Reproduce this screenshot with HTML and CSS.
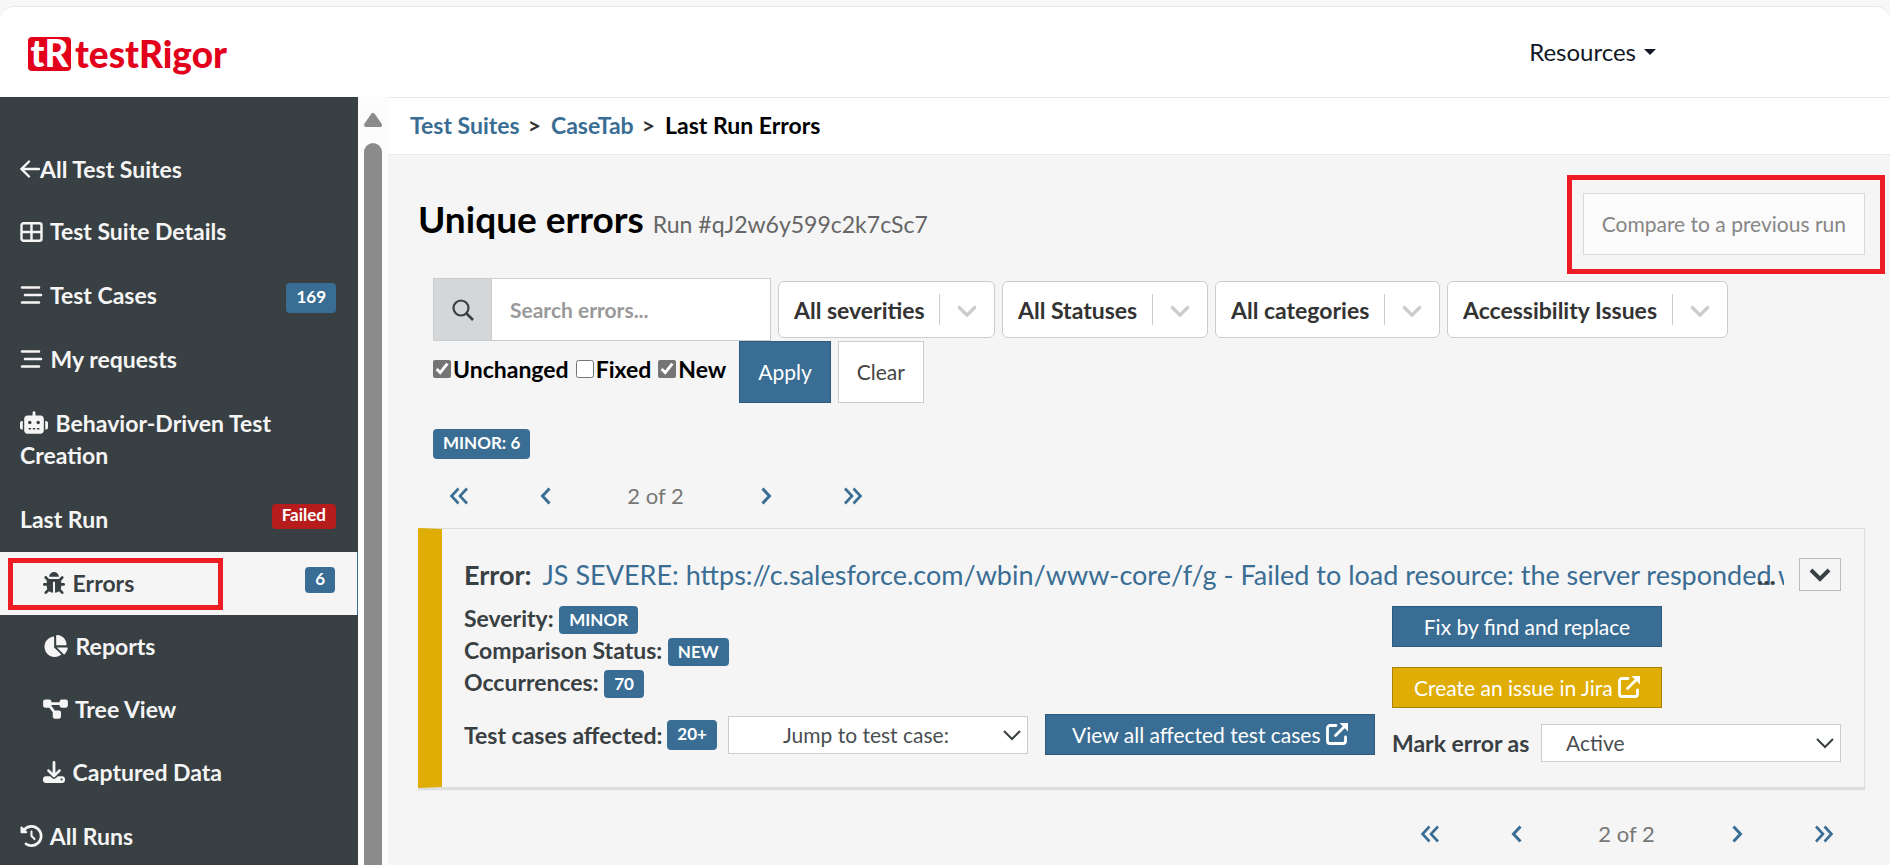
FILE: index.html
```
<!DOCTYPE html>
<html lang="en">
<head>
  <meta charset="UTF-8" />
  <meta name="viewport" content="width=device-width, initial-scale=1.0"/>
  <title>Last Run Errors - testRigor</title>
  <link rel="stylesheet" href="styles.css">
</head>
<body>
  <!-- shared icons -->
  <svg class="sprite" aria-hidden="true">
    <symbol id="bars" viewBox="0 0 22 18"><path d="M1.5 1.5h17M4.5 9h16M1.5 16.5h17" fill="none" stroke="currentColor" stroke-width="2.5" stroke-linecap="round"/></symbol>
    <symbol id="external" viewBox="0 0 22 22"><path d="M10 2.5H4a2.5 2.5 0 0 0-2.500 2.500v13A2.500 2.500 0 0 0 4 20.500h13a2.500 2.500 0 0 0 2.500-2.500v-4M9.500 12.500 18.500 3.500" fill="none" stroke="currentColor" stroke-width="2.800" stroke-linecap="round"/><path d="M13.5 0h8.500v8.500z" fill="currentColor"/></symbol>
    <symbol id="chevron" viewBox="0 0 20 20"><path d="M4.5 7.500l5.500 5.500 5.500-5.500" fill="none" stroke="currentColor" stroke-width="2.400" stroke-linecap="round"/></symbol>
    <symbol id="caret" viewBox="0 0 20 20"><path d="M2 6l8 8 8-8" fill="none" stroke="currentColor" stroke-width="2"/></symbol>
    <symbol id="left" viewBox="0 0 20 20"><path d="M13.5 2.500l-7 7.500 7 7.500" fill="none" stroke="currentColor" stroke-width="3"/></symbol>
    <symbol id="right" viewBox="0 0 20 20"><path d="M6.500 2.500l7 7.500-7 7.500" fill="none" stroke="currentColor" stroke-width="3"/></symbol>
    <symbol id="first" viewBox="0 0 20 20"><path d="M9.500 2.500l-7 7.500 7 7.500M18 2.500 11 10l7 7.500" fill="none" stroke="currentColor" stroke-width="2.600"/></symbol>
    <symbol id="last" viewBox="0 0 20 20"><path d="M2 2.500 9 10l-7 7.500M10.500 2.500l7 7.500-7 7.500" fill="none" stroke="currentColor" stroke-width="2.600"/></symbol>
  </svg>

  <header class="topbar">
    <a class="logo" href="#"><span class="logo-mark">tR</span><span class="logo-name">testRigor</span></a>
    <button class="resources" type="button">Resources <span class="down"></span></button>
  </header>

  <div class="shell">
    <nav class="sidebar">
      <a class="nav-item back" href="#"><svg width="20" height="18" viewBox="0 0 20 18"><path d="M19 9H2M9 1.500 1.500 9 9 16.500" fill="none" stroke="currentColor" stroke-width="2.400" stroke-linecap="round"/></svg>All Test Suites</a>
      <a class="nav-item" href="#"><svg class="icon" width="23" height="20" viewBox="0 0 23 20"><path d="M3.500 1.200h16a2 2 0 0 1 2 2v13.600a2 2 0 0 1-2 2h-16a2 2 0 0 1-2-2V3.200a2 2 0 0 1 2-2zM1.500 10h20M11.500 1v18" fill="none" stroke="currentColor" stroke-width="2.400"/></svg> Test Suite Details</a>
      <a class="nav-item" href="#"><svg class="icon short" width="23" height="18"><use href="#bars"/></svg> Test Cases <span class="badge side">169</span></a>
      <a class="nav-item" href="#"><svg class="icon short" width="23" height="18"><use href="#bars"/></svg> My requests</a>
      <a class="nav-item" href="#"><svg class="icon" width="28" height="23" viewBox="0 0 640 512"><path fill="currentColor" d="M320 0c17.700 0 32 14.300 32 32V96H472c39.800 0 72 32.200 72 72V440c0 39.800-32.200 72-72 72H168c-39.800 0-72-32.200-72-72V168c0-39.800 32.200-72 72-72H288V32c0-17.700 14.300-32 32-32zM208 384c-8.800 0-16 7.200-16 16s7.200 16 16 16h32c8.800 0 16-7.200 16-16s-7.200-16-16-16H208zm96 0c-8.800 0-16 7.200-16 16s7.200 16 16 16h32c8.800 0 16-7.200 16-16s-7.200-16-16-16H304zm96 0c-8.800 0-16 7.200-16 16s7.200 16 16 16h32c8.800 0 16-7.200 16-16s-7.200-16-16-16H400zM264 256a40 40 0 1 0 -80 0 40 40 0 1 0 80 0zm152 40a40 40 0 1 0 0-80 40 40 0 1 0 0 80zM48 224H64V416H48c-26.500 0-48-21.500-48-48V272c0-26.500 21.500-48 48-48zm544 0c26.500 0 48 21.500 48 48v96c0 26.500-21.500 48-48 48H576V224h16z"/></svg> Behavior-Driven Test Creation</a>
      <a class="nav-item" href="#">Last Run <span class="badge side failed">Failed</span></a>
      <a class="nav-item sub active" href="#"><svg class="icon" width="22" height="22" viewBox="0 0 512 512"><path fill="currentColor" d="M511.988 288.900c-.478 17.430-15.217 31.100-32.653 31.100H424v16c0 21.864-4.882 42.584-13.600 61.145l60.228 60.228c12.496 12.497 12.496 32.758 0 45.255-12.498 12.497-32.759 12.496-45.256 0l-54.736-54.736C345.886 467.965 314.351 480 280 480V236c0-6.627-5.373-12-12-12h-24c-6.627 0-12 5.373-12 12v244c-34.351 0-65.886-12.035-90.636-32.108l-54.736 54.736c-12.498 12.497-32.759 12.496-45.256 0-12.496-12.497-12.496-32.758 0-45.255l60.228-60.228C92.882 378.584 88 357.864 88 336v-16H32.666C15.230 320 .491 306.330.013 288.900-.484 270.816 14.028 256 32 256h56v-58.745l-46.628-46.628c-12.496-12.497-12.496-32.758 0-45.255 12.498-12.497 32.758-12.497 45.256 0L141.255 160h229.489l54.627-54.627c12.498-12.497 32.758-12.497 45.256 0 12.496 12.497 12.496 32.758 0 45.255L424 197.255V256h56c17.972 0 32.484 14.816 31.988 32.900zM257 0c-61.856 0-112 50.144-112 112h224C369 50.144 318.856 0 257 0z"/></svg> Errors <span class="badge side">6</span><span class="mark mark-nav"></span></a>
      <a class="nav-item sub" href="#"><svg class="icon" width="25" height="22" viewBox="0 0 576 512"><path fill="currentColor" d="M304 240V16.600c0-9 7-16.600 16-16.600C443.700 0 544 100.300 544 224c0 9-7.600 16-16.600 16H304zM32 272C32 150.700 122.100 50.300 239 34.300c9.200-1.300 17 6.100 17 15.400V288L412.500 444.500c6.700 6.700 6.200 17.700-1.500 23.100C371.800 495.600 323.800 512 272 512C139.500 512 32 404.600 32 272zm526.400 16c9.300 0 16.600 7.800 15.400 17c-7.700 55.900-34.600 105.600-73.900 142.300c-6 5.600-15.400 5.200-21.200-.7L320 288H558.400z"/></svg> Reports</a>
      <a class="nav-item sub" href="#"><svg class="icon" width="25" height="22" viewBox="0 0 576 512"><path fill="currentColor" d="M0 80C0 53.500 21.500 32 48 32h96c26.500 0 48 21.500 48 48V96H384V80c0-26.500 21.500-48 48-48h96c26.500 0 48 21.500 48 48v96c0 26.500-21.500 48-48 48H432c-26.500 0-48-21.500-48-48V160H192v16c0 1.700-.1 3.400-.3 5L272 288h96c26.500 0 48 21.500 48 48v96c0 26.500-21.500 48-48 48H272c-26.500 0-48-21.500-48-48V336c0-1.700 .1-3.400 .3-5L144 224H48c-26.500 0-48-21.500-48-48V80z"/></svg> Tree View</a>
      <a class="nav-item sub" href="#"><svg class="icon" width="22" height="22" viewBox="0 0 512 512"><path fill="currentColor" d="M288 32c0-17.700-14.300-32-32-32s-32 14.300-32 32V274.700l-73.400-73.400c-12.500-12.500-32.800-12.500-45.300 0s-12.500 32.800 0 45.300l128 128c12.500 12.500 32.800 12.500 45.300 0l128-128c12.500-12.500 12.500-32.800 0-45.300s-32.800-12.500-45.300 0L288 274.700V32zM64 352c-35.300 0-64 28.700-64 64v32c0 35.300 28.700 64 64 64H448c35.300 0 64-28.700 64-64V416c0-35.300-28.700-64-64-64H346.500l-45.300 45.300c-25 25-65.500 25-90.500 0L165.500 352H64zm368 56a24 24 0 1 1 0 48 24 24 0 1 1 0-48z"/></svg> Captured Data</a>
      <a class="nav-item" href="#"><svg class="icon" width="23" height="22" viewBox="0 0 512 512"><path fill="currentColor" d="M75 75L41 41C25.900 25.900 0 36.600 0 57.900V168c0 13.300 10.700 24 24 24H134.100c21.400 0 32.100-25.900 17-41l-30.800-30.800C155 85.500 203 64 256 64c106 0 192 86 192 192s-86 192-192 192c-40.800 0-78.600-12.700-109.700-34.400c-14.500-10.100-34.400-6.600-44.600 7.900s-6.600 34.400 7.900 44.600C151.200 495 201.700 512 256 512c141.400 0 256-114.600 256-256S397.400 0 256 0C185.300 0 121.300 28.700 75 75zm181 53c-13.300 0-24 10.700-24 24V256c0 6.400 2.500 12.500 7 17l72 72c9.400 9.400 24.600 9.400 33.900 0s9.400-24.600 0-33.900l-65-65V152c0-13.300-10.700-24-24-24z"/></svg> All Runs</a>
    </nav>

    <div class="scroll">
      <svg width="18" height="14" viewBox="0 0 18 14"><path d="M9 2 16 12H2z" fill="#8b8b8b" stroke="#8b8b8b" stroke-width="4" stroke-linejoin="round"/></svg>
      <div class="thumb"></div>
    </div>

    <main class="main">
      <div class="breadcrumb">
        <a href="#">Test Suites</a><span class="sep">&gt;</span><a href="#">CaseTab</a><span class="sep">&gt;</span><span>Last Run Errors</span>
      </div>

      <div class="content">
        <div class="page-head">
          <h1>Unique errors <small>Run #qJ2w6y599c2k7cSc7</small></h1>
          <div class="compare">
            <button class="btn btn-light" type="button" disabled>Compare to a previous run</button>
            <span class="mark mark-compare"></span>
          </div>
        </div>

        <form class="filters">
          <div class="filter-row">
            <label class="search">
              <span class="search-icon"><svg width="22" height="22" viewBox="0 0 22 22"><circle cx="9" cy="9" r="7.500" fill="none" stroke="currentColor" stroke-width="2.200"/><path d="M14 14l7 7" stroke="currentColor" stroke-width="2.600"/></svg></span>
              <input type="text" placeholder="Search errors..." aria-label="Search errors">
            </label>
            <div class="pick"><select aria-label="Severity"><option>All severities</option></select><svg width="28" height="28"><use href="#chevron"/></svg></div>
            <div class="pick"><select aria-label="Status"><option>All Statuses</option></select><svg width="28" height="28"><use href="#chevron"/></svg></div>
            <div class="pick"><select aria-label="Category"><option>All categories</option></select><svg width="28" height="28"><use href="#chevron"/></svg></div>
            <div class="pick"><select aria-label="Accessibility"><option>Accessibility Issues</option></select><svg width="28" height="28"><use href="#chevron"/></svg></div>
          </div>
          <div class="filter-row checks">
            <label><input type="checkbox" checked>Unchanged</label>
            <label><input type="checkbox">Fixed</label>
            <label><input type="checkbox" checked>New</label>
            <button class="btn btn-blue apply" type="button">Apply</button>
            <button class="btn btn-white" type="button">Clear</button>
          </div>
          <div class="totals"><span class="badge tall">MINOR: 6</span></div>
        </form>

        <div class="pager">
          <a href="#" aria-label="First"><svg width="20" height="20"><use href="#first"/></svg></a>
          <a href="#" aria-label="Previous"><svg width="20" height="20"><use href="#left"/></svg></a>
          <span>2 of 2</span>
          <a href="#" aria-label="Next"><svg width="20" height="20"><use href="#right"/></svg></a>
          <a href="#" aria-label="Last"><svg width="20" height="20"><use href="#last"/></svg></a>
        </div>

        <section class="card">
          <div class="card-head">
            <div class="title"><strong>Error:</strong> <a href="#">JS SEVERE: https://c.salesforce.com/wbin/www-core/f/g - Failed to load resource: the server responded with a status</a><span class="dots">...</span></div>
            <button class="toggle" type="button" aria-label="Expand"><svg width="22" height="18" viewBox="0 0 22 18"><path d="M2 4l9 9 9-9" fill="none" stroke="currentColor" stroke-width="4"/></svg></button>
          </div>
          <div class="card-body">
            <div class="info">
              <div>Severity: <span class="badge">MINOR</span></div>
              <div>Comparison Status: <span class="badge">NEW</span></div>
              <div>Occurrences: <span class="badge">70</span></div>
              <div class="affected">
                <span>Test cases affected:</span>
                <span class="badge tall">20+</span>
                <div class="drop jump"><select aria-label="Jump to test case"><option>Jump to test case:</option></select><svg width="20" height="20"><use href="#caret"/></svg></div>
                <button class="btn btn-blue slim view" type="button">View all affected test cases <svg width="22" height="22"><use href="#external"/></svg></button>
              </div>
            </div>
            <div class="actions">
              <button class="btn btn-blue slim wide" type="button">Fix by find and replace</button>
              <button class="btn btn-gold slim wide" type="button">Create an issue in Jira <svg width="22" height="22"><use href="#external"/></svg></button>
              <div class="mark-as">
                <label for="mark">Mark error as</label>
                <div class="drop"><select id="mark"><option>Active</option></select><svg width="20" height="20"><use href="#caret"/></svg></div>
              </div>
            </div>
          </div>
        </section>

        <div class="pager end">
          <a href="#" aria-label="First"><svg width="20" height="20"><use href="#first"/></svg></a>
          <a href="#" aria-label="Previous"><svg width="20" height="20"><use href="#left"/></svg></a>
          <span>2 of 2</span>
          <a href="#" aria-label="Next"><svg width="20" height="20"><use href="#right"/></svg></a>
          <a href="#" aria-label="Last"><svg width="20" height="20"><use href="#last"/></svg></a>
        </div>
      </div>
    </main>
  </div>
</body>
</html>
```
FILE: styles.css
```
* {
  box-sizing: border-box;
}

body {
  margin: 0;
  padding-top: 6px;
  height: 100vh;
  display: flex;
  flex-direction: column;
  overflow: hidden;
  background: #f7f7f7;
  color: #000;
  font-family: Lato, "Liberation Sans", sans-serif;
  font-size: 23px;
  line-height: 32px;
}

a {
  color: #3a6d94;
  text-decoration: none;
}

button, input, select {
  font: inherit;
  margin: 0;
}

.sprite {
  position: absolute;
  width: 0;
  height: 0;
}

/* header */
.topbar {
  flex: none;
  height: 91px;
  display: flex;
  align-items: center;
  justify-content: space-between;
  padding: 0 234px 0 28px;
  background: #fff;
  border-top: 1px solid #e8e8e8;
  border-radius: 14px 14px 0 0;
}

.logo {
  display: flex;
  align-items: center;
  gap: 4px;
  padding-top: 4px;
  color: #e2001a;
  font-weight: 900;
  line-height: 34px;
}

.logo-mark {
  width: 43px;
  height: 34px;
  border-radius: 4px;
  background: #e2001a;
  color: #fff;
  font-size: 37px;
  line-height: 32px;
  text-align: center;
}

.logo-name {
  font-size: 37px;
}

.resources {
  display: flex;
  align-items: center;
  gap: 8px;
  padding: 0;
  border: 0;
  background: none;
  color: #121826;
  font-size: 24px;
}

.down {
  border: 6px solid transparent;
  border-top-color: #121826;
  border-bottom: 0;
}

.shell {
  flex: 1;
  display: flex;
  min-height: 0;
}

/* sidebar */
.sidebar {
  flex: none;
  width: 358px;
  padding-top: 40px;
  overflow: hidden;
  background: #394043;
}

.nav-item {
  position: relative;
  display: block;
  padding: 16px 80px 16px 20px;
  color: #f5f5f5;
  font-weight: bold;
}

.nav-item.back {
  padding-bottom: 14px;
}

.nav-item .icon {
  margin-right: 2px;
  vertical-align: -2px;
}

.nav-item .icon.short {
  vertical-align: 0;
}

.nav-item.sub {
  padding: 15px 80px 16px 43px;
}

.nav-item.active {
  margin-top: 1px;
  background: #f5f5f5;
  border-right: 1px solid #3a6d94;
  color: #394043;
}

.badge {
  display: inline-block;
  height: 28px;
  padding: 0 10px;
  border-radius: 4px;
  background: #3a6d94;
  color: #fff;
  font-size: 17px;
  font-weight: bold;
  line-height: 28px;
}

.badge.tall {
  height: 30px;
}

.badge.side {
  position: absolute;
  top: 20px;
  right: 22px;
  height: 30px;
}

.badge.failed {
  top: 17px;
  height: 25px;
  line-height: 22px;
  background: #b71c1c;
}

.active .badge.side {
  top: 15px;
  height: 26px;
  line-height: 24px;
}

/* highlight frames */
.mark {
  position: absolute;
  border: 5px solid #ee1c24;
  pointer-events: none;
}

.mark-nav {
  top: 6px;
  left: 8px;
  width: 215px;
  height: 52px;
}

.mark-compare {
  top: -18px;
  right: -20px;
  bottom: -19px;
  left: -16px;
}

.scroll {
  flex: none;
  width: 30px;
  padding: 16px 6px 0;
  display: flex;
  flex-direction: column;
  align-items: center;
  gap: 16px;
  background: #fcfcfc;
}

.scroll svg {
  flex: none;
}

.thumb {
  flex: 1;
  width: 18px;
  border-radius: 9px 9px 0 0;
  background: #8b8b8b;
}

/* main area */
.main {
  flex: 1;
  min-width: 0;
  background: #f5f5f5;
}

.breadcrumb {
  padding: 11px 22px 13px;
  background: #fff;
  border-top: 1px solid #e9e9e9;
  border-bottom: 1px solid #e9e9e9;
  font-weight: bold;
}

.breadcrumb .sep {
  margin: 0 10px 0 8px;
  color: #333;
}

.content {
  padding: 38px 25px 0 30px;
}

.page-head {
  display: flex;
  justify-content: space-between;
  align-items: flex-start;
}

h1 {
  margin: 0;
  font-size: 37px;
  line-height: 52px;
}

h1 small {
  color: #666;
  font-size: 23px;
  font-weight: normal;
}

.compare {
  position: relative;
}

.btn {
  height: 62px;
  padding: 0 18px;
  border: 1px solid #ccc;
  font-size: 21px;
  font-weight: normal;
  line-height: 30px;
}

.btn svg {
  vertical-align: -2px;
}

.btn-light {
  border-color: #d9d9d9;
  background: #fbfbfb;
  color: #868686;
}

.btn-white {
  background: #fff;
  color: #444;
}

.btn-blue {
  border-color: #2d5a7d;
  background: #3a6d94;
  color: #fff;
}

.btn-gold {
  border-color: #a88205;
  background: #dfad06;
  color: #fff;
}

.btn.slim {
  height: 41px;
}

.btn.wide {
  width: 270px;
}

.filters {
  padding: 23px 15px 0;
}

.filter-row {
  display: flex;
  align-items: center;
  gap: 7px;
}

.search {
  display: flex;
  width: 338px;
  height: 63px;
  border: 1px solid #ccc;
  background: #fff;
}

.search-icon {
  flex: none;
  width: 58px;
  display: flex;
  align-items: center;
  justify-content: center;
  border-right: 1px solid #ccc;
  background: #d3d7d9;
  color: #394043;
}

.search input {
  flex: 1;
  min-width: 0;
  padding: 0 18px;
  border: 0;
  outline: 0;
  font-size: 21px;
  font-weight: bold;
}

.search input::placeholder {
  color: #999;
}

.pick {
  position: relative;
}

.pick::after {
  content: "";
  position: absolute;
  top: 13px;
  bottom: 13px;
  right: 55px;
  width: 1px;
  background: #ccc;
}

.pick select {
  height: 57px;
  padding: 0 69px 0 15px;
  border: 1px solid #ccc;
  border-radius: 6px;
  appearance: none;
  background: #fff;
  color: #333;
  font-weight: bold;
}

.pick svg {
  position: absolute;
  top: 16px;
  right: 14px;
  color: #ccc;
  pointer-events: none;
}

.checks {
  font-weight: bold;
}

.checks label {
  display: flex;
  align-items: center;
  gap: 2px;
  margin-bottom: 6px;
}

.checks input {
  width: 18px;
  height: 18px;
  accent-color: #757575;
}

.checks .apply {
  margin-left: 6px;
}

.totals {
  display: flex;
  margin-top: 26px;
}

/* pagination */
.pager {
  display: flex;
  align-items: center;
  height: 69px;
  margin-left: -3px;
  padding-top: 5px;
  color: #777;
  font-size: 22px;
}

.pager a {
  width: 87px;
  display: flex;
  justify-content: center;
}

.pager span {
  width: 133px;
  text-align: center;
}

.pager.end {
  justify-content: flex-end;
  height: 92px;
  margin-right: -2px;
  padding-top: 0;
}

/* error card */
.card {
  padding: 29px 23px 25px 22px;
  border: 1px solid #ddd;
  border-left: 24px solid #dfad06;
  box-shadow: 0 2px 1px #ddd;
  color: #394043;
}

.card-head {
  display: flex;
  gap: 15px;
  align-items: center;
}

.title {
  position: relative;
  flex: 1;
  overflow: hidden;
  font-size: 27px;
  white-space: nowrap;
}

.title a {
  margin-left: 4px;
}

.dots {
  position: absolute;
  right: 8px;
  font-weight: bold;
}

.toggle {
  width: 42px;
  height: 33px;
  padding: 0;
  border: 1px solid #bbb;
  background: #f5f5f5;
  color: #394043;
}

.toggle svg {
  display: block;
  margin: auto;
}

.card-body {
  display: flex;
  gap: 17px;
  margin-top: 11px;
}

.info {
  flex: 1;
  font-weight: bold;
}

.info .badge {
  margin-top: 4px;
  vertical-align: top;
}

.affected {
  display: flex;
  align-items: center;
  gap: 5px;
  margin-top: 16px;
}

.affected .badge {
  margin-top: 0;
}

.drop {
  position: relative;
  width: 300px;
}

.drop select {
  width: 100%;
  height: 38px;
  padding: 0 24px;
  border: 1px solid #ccc;
  appearance: none;
  background: #fff;
  color: #4a4f52;
  font-size: 21px;
  font-weight: normal;
}

.drop svg {
  position: absolute;
  top: 9px;
  right: 6px;
  pointer-events: none;
}

.jump {
  margin-left: 6px;
}

.jump select {
  padding-right: 48px;
  text-align-last: center;
}

.view {
  width: 330px;
  margin-left: auto;
}

.actions {
  width: 449px;
  display: flex;
  flex-direction: column;
  align-items: flex-start;
  gap: 20px;
  padding-top: 4px;
}

.mark-as {
  width: 100%;
  display: flex;
  justify-content: space-between;
  align-items: center;
  margin-top: -4px;
  font-weight: bold;
}
```
